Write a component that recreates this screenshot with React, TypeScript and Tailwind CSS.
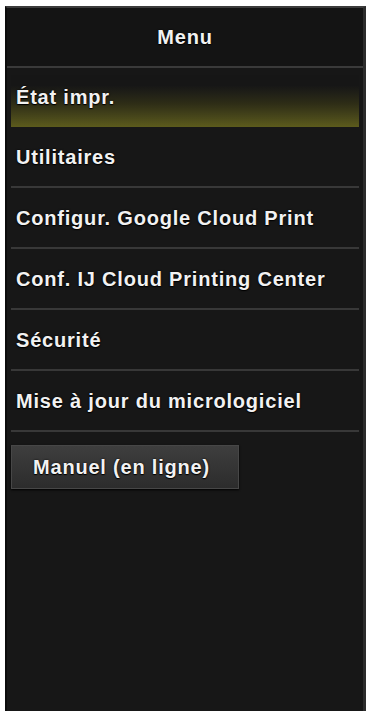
const items = [
  "Utilitaires",
  "Configur. Google Cloud Print",
  "Conf. IJ Cloud Printing Center",
  "Sécurité",
  "Mise à jour du micrologiciel",
];

const textCls =
  "text-[20px] font-bold text-[#f2f2f2] tracking-[0.8px] [text-shadow:0_0_2px_#000,0_1px_1px_#000]";

export default function App() {
  return (
    <div
      className="w-[370px] h-[715px] bg-white pt-[6px] pl-[5px] pr-[4px] pb-[4px]"
      style={{ fontFamily: '"Liberation Sans", Arial, sans-serif' }}
    >
      <div className="h-full flex flex-col bg-[#171717] border-t-2 border-t-[#3c3c3c] border-l-2 border-l-[#0c0c0c] border-r-[3px] border-r-[#2c2c2c]">
        {/* Header */}
        <div className="h-[60px] flex items-center justify-center bg-[#141414] border-b-2 border-b-[#3a3a3a]">
          <span className={textCls}>Menu</span>
        </div>

        <div className="px-[4px]">
          {/* Selected item */}
          <div className="h-[59px] pt-[7px]">
            <div className="h-[52px] flex items-center pl-[5px] pb-[8px] bg-gradient-to-b from-[#161616] from-20% via-[#2e2d16] via-55% to-[#5c5b1c]">
              <span className={textCls}>État impr.</span>
            </div>
          </div>

          {items.map((label) => (
            <div
              key={label}
              className="h-[61px] flex items-center pl-[5px] border-b-2 border-b-[#383838]"
            >
              <span className={textCls}>{label}</span>
            </div>
          ))}

          <div className="pt-[13px]">
            <div className="w-[228px] h-[44px] flex items-center pl-[21px] bg-gradient-to-b from-[#3e3e3e] to-[#2c2c2c] border border-[#474747] shadow-[0_1px_2px_#000]">
              <span className={textCls}>Manuel (en ligne)</span>
            </div>
          </div>
        </div>
      </div>
    </div>
  );
}
